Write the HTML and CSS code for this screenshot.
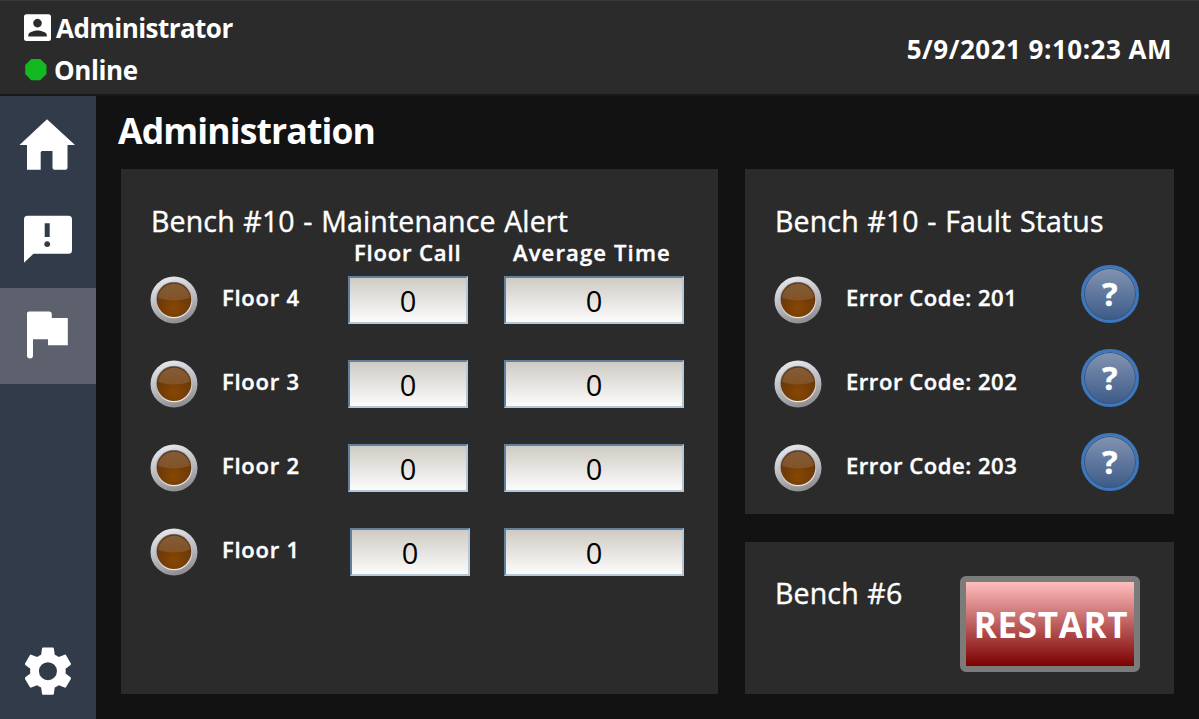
FILE: index.html
```html
<!DOCTYPE html>
<html lang="en">
<head>
<meta charset="utf-8">
<title>Administration</title>
<link rel="stylesheet" href="styles.css">
</head>
<body>
<svg class="defs" width="0" height="0">
  <defs>
    <linearGradient id="ring" x1="0.3" y1="0" x2="0.6" y2="1">
      <stop offset="0" stop-color="#e8e9ef"/><stop offset="0.5" stop-color="#bdbec3"/><stop offset="1" stop-color="#8c8c8e"/>
    </linearGradient>
    <linearGradient id="bevel" x1="0" y1="0" x2="0.3" y2="1">
      <stop offset="0" stop-color="#85868a"/><stop offset="0.5" stop-color="#b0b0b5"/><stop offset="1" stop-color="#e8e8ea"/>
    </linearGradient>
    <radialGradient id="amber" cx="0.5" cy="0.75" r="0.75">
      <stop offset="0" stop-color="#884703"/><stop offset="0.5" stop-color="#733c06"/><stop offset="1" stop-color="#5c3818"/>
    </radialGradient>
    <linearGradient id="gloss" x1="0" y1="0" x2="0" y2="1">
      <stop offset="0" stop-color="#8b6541"/><stop offset="1" stop-color="#84572e"/>
    </linearGradient>
    <symbol id="led" viewBox="0 0 48 48">
      <circle cx="24" cy="24" r="23.5" fill="url(#ring)"/>
      <circle cx="24" cy="24" r="18.3" fill="url(#bevel)"/>
      <circle cx="24" cy="23.700" r="17.300" fill="url(#amber)"/>
      <path d="M8 21.500a16.200 16.200 0 0 1 32 0c-8 4-24 4-32 0z" fill="url(#gloss)" opacity=".8"/>
    </symbol>
  </defs>
</svg>
<div class="screen">
  <header class="header">
    <div class="status">
      <div class="status-row">
        <svg class="status-icon" viewBox="0 0 28 28"><path fill="#fff" fill-rule="evenodd" d="M2.500 .2h22a2.500 2.500 0 0 1 2.500 2.500v21.800a2.500 2.500 0 0 1-2.500 2.500h-22a2.500 2.500 0 0 1-2.500-2.500v-21.800a2.500 2.500 0 0 1 2.500-2.500zM13.500 4.800a4.300 4.300 0 1 0 .01 0zM4.300 22.500h18.500v-1.500c0-3-6.200-4.500-9.250-4.500s-9.250 1.500-9.250 4.500z"/></svg>
        <span class="user">Administrator</span>
      </div>
      <div class="status-row">
        <svg class="status-icon" viewBox="0 0 28 28"><path fill="#14b821" d="M7.200 3h9l6.300 6v9l-6.300 6.300h-9l-6-6.300v-9z"/></svg>
        <span class="online">Online</span>
      </div>
    </div>
    <time class="clock">5/9/2021 9:10:23 AM</time>
  </header>
  <div class="body">
    <nav class="sidebar">
      <a class="nav-item"><svg viewBox="0 0 96 96"><path d="M47 23.300L75 49h-7.500v22.700a2 2 0 0 1-2 2H54.500a2 2 0 0 1-2-2V55H42.200q-1.500 0-1.500 1.500V73.700H27V49h-7.500z"/></svg></a>
      <a class="nav-item"><svg viewBox="0 0 96 96"><path fill-rule="evenodd" d="M27.500 23.700h41a3.500 3.500 0 0 1 3.500 3.500v31a3.500 3.500 0 0 1-3.500 3.500H33.500l-9.500 9V27.200a3.500 3.500 0 0 1 3.500-3.500zM44.700 31.300v13.700h5V31.300zM47.200 49.300a2.900 2.900 0 1 0 .01 0z"/></svg></a>
      <a class="nav-item active"><svg viewBox="0 0 96 96"><path d="M29 23.500h20.500a2.500 2.500 0 0 1 2.300 2.500v4H67.800v27.200H48V51.300H33v16.200a3 3 0 0 1-6 0V25.500a2 2 0 0 1 2-2z"/></svg></a>
      <a class="nav-item settings"><svg viewBox="0 0 96 96"><path transform="translate(19.500 19.700) scale(2.370)" d="M12 15.800A3.800 3.800 0 1 1 12 8.200a3.800 3.800 0 0 1 0 7.600M19.430 12.970c.04-.32.07-.64.07-.97s-.03-.66-.07-1l2.110-1.630c.19-.15.24-.42.12-.64l-2-3.460c-.12-.22-.39-.31-.61-.22l-2.490 1c-.52-.39-1.060-.73-1.690-.98l-.37-2.650A.506.506 0 0 0 14 2h-4c-.25 0-.46.180-.5.420l-.37 2.650c-.63.250-1.170.590-1.690.980l-2.490-1c-.22-.09-.49 0-.61.220l-2 3.460c-.13.220-.07.490.12.640L4.570 11c-.04.340-.07.670-.07 1s.03.650.07.970l-2.110 1.660c-.19.150-.25.420-.12.640l2 3.460c.12.220.39.300.61.220l2.490-1.010c.52.400 1.060.740 1.690.990l.37 2.650c.04.240.25.420.5.420h4c.25 0 .46-.18.5-.42l.37-2.650c.63-.26 1.170-.59 1.690-.99l2.490 1.010c.22.080.49 0 .61-.22l2-3.460c.12-.22.07-.49-.12-.64z"/></svg></a>
    </nav>
    <main class="main">
      <h1 class="title">Administration</h1>
      <div class="panels">
        <section class="panel alerts">
          <h2 class="alert-title">Bench #10 - Maintenance Alert</h2>
          <div class="heads"><span class="head call">Floor Call</span><span class="head avg">Average Time</span></div>
          <div class="row"><svg class="led"><use href="#led"/></svg><span class="label">Floor 4</span><span class="field">0</span><span class="field wide">0</span></div>
          <div class="row"><svg class="led"><use href="#led"/></svg><span class="label">Floor 3</span><span class="field">0</span><span class="field wide">0</span></div>
          <div class="row"><svg class="led"><use href="#led"/></svg><span class="label">Floor 2</span><span class="field">0</span><span class="field wide">0</span></div>
          <div class="row"><svg class="led"><use href="#led"/></svg><span class="label">Floor 1</span><span class="field shifted">0</span><span class="field wide">0</span></div>
        </section>
        <div class="side">
          <section class="panel faults">
            <h2 class="fault-title">Bench #10 - Fault Status</h2>
            <div class="row"><svg class="led"><use href="#led"/></svg><span class="label code">Error Code: 201</span><button class="help">?</button></div>
            <div class="row"><svg class="led"><use href="#led"/></svg><span class="label code">Error Code: 202</span><button class="help">?</button></div>
            <div class="row"><svg class="led"><use href="#led"/></svg><span class="label code">Error Code: 203</span><button class="help">?</button></div>
          </section>
          <section class="panel bench">
            <h2 class="bench-title">Bench #6</h2>
            <button class="restart">RESTART</button>
          </section>
        </div>
      </div>
    </main>
  </div>
</div>
</body>
</html>
```
FILE: styles.css
```css
* { box-sizing: border-box; }
body { margin: 0; background: #121212; color: #fff; font-family: "Open Sans", "Noto Sans", sans-serif; }
h1, h2 { margin: 0; white-space: nowrap; }
button { margin: 0; padding: 0; color: #fff; font-family: inherit; }
.defs { display: block; }
.screen { width: 1199px; height: 719px; overflow: hidden; display: flex; flex-direction: column; }

.header { height: 96px; flex: none; display: flex; justify-content: space-between; background: #2b2b2b; border-top: 1px solid #383838; border-bottom: 2px solid #191919; padding: 6px 27px 0 24px; }
.status-row { display: flex; align-items: center; height: 42px; gap: 4px; font-size: 26px; font-weight: 700; line-height: 42px; }
.status-icon { width: 28px; height: 28px; }
.user { letter-spacing: -0.55px; }
.online { letter-spacing: -0.4px; margin-left: -2px; }
.clock { font-size: 26px; font-weight: 700; line-height: 42px; padding-top: 21px; letter-spacing: 0.5px; white-space: nowrap; }

.body { flex: 1; display: flex; min-height: 0; }
.sidebar { width: 96px; background: #323b4a; display: flex; flex-direction: column; }
.nav-item { height: 96px; }
.nav-item svg { display: block; width: 96px; height: 96px; fill: #fff; }
.active { background: #5c616d; }
.settings { margin-top: auto; }

.main { flex: 1; padding-left: 25px; }
.title { height: 73px; margin-left: -3px; font-size: 35.5px; line-height: 69px; font-weight: 700; letter-spacing: -0.85px; }
.panels { display: flex; gap: 27px; }
.panel { background: #2b2b2b; }
.panel h2 { font-size: 28.5px; line-height: 40px; font-weight: 400; letter-spacing: 0.15px; word-spacing: 1px; -webkit-text-stroke: 0.4px #fff; }
.alerts { width: 597px; height: 525px; padding: 32px 0 0 30px; }
.side { display: flex; flex-direction: column; gap: 28px; }
.faults { width: 429px; height: 345px; padding: 32px 0 0 30px; }
.bench { height: 152px; padding: 31px 34px 0 30px; display: flex; justify-content: space-between; }
.faults h2 { margin-bottom: 35px; }

.heads { display: flex; height: 35px; padding-left: 203px; font-size: 22px; font-weight: 600; line-height: 22px; white-space: nowrap; -webkit-text-stroke: 0.4px #fff; }
.call { width: 159px; letter-spacing: 0.85px; }
.avg { letter-spacing: 1.15px; }
.row { display: flex; height: 84px; }
.led { display: block; width: 48px; height: 48px; margin-left: -1px; }
.label { width: 126px; margin-left: 24px; font-size: 22px; font-weight: 600; line-height: 42px; letter-spacing: 0.75px; white-space: nowrap; -webkit-text-stroke: 0.4px #fff; }
.code { width: 235px; letter-spacing: 0.55px; }
.field { width: 120px; height: 48px; margin-right: 36px; border: 2px solid; border-color: #60809d #b5c6d5 #b5c6d5 #60809d; background: linear-gradient(#cfcbc4, #fcfcfc); color: #000; font-size: 29px; line-height: 45px; text-align: center; }
.wide { width: 180px; margin-right: 0; }
.shifted { margin-left: 2px; margin-right: 34px; }
.help { width: 58px; height: 58px; margin-top: -11px; border: 3px solid #3d78be; border-radius: 50%; background: linear-gradient(#8494b1, #5f779d 50%, #3d5b88); font-size: 32px; font-weight: 700; line-height: 48px; box-shadow: inset 0 0 0 1px #365887; -webkit-text-stroke: 0.5px #fff; }
.restart { width: 180px; height: 96px; margin-top: 3px; padding-left: 2px; border: 6px solid #7b7c79; border-radius: 6px; background: linear-gradient(#ffbebe, #7c0000) padding-box #7b7c79; font-size: 35px; font-weight: 700; letter-spacing: 0.7px; white-space: nowrap; }
```
